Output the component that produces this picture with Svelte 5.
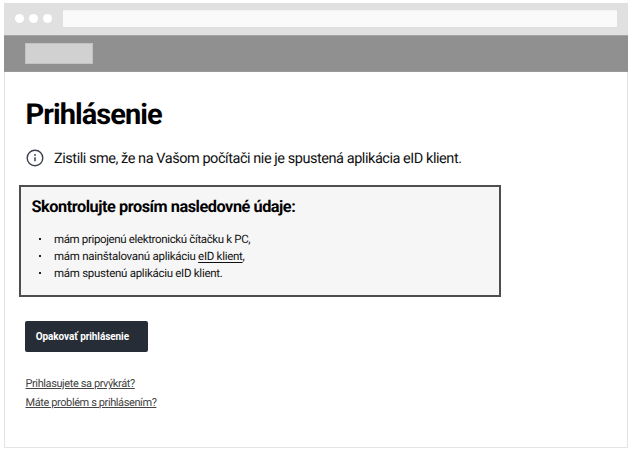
<script>
  const checks = [
    { text: 'mám pripojenú elektronickú čítačku k PC,', tight: true },
    { text: 'mám nainštalovanú aplikáciu ', link: 'eID klient', tail: ',' },
    { text: 'mám spustenú aplikáciu eID klient.' }
  ];
</script>

<div class="window">
  <div class="chrome">
    <div class="dots"><i></i><i></i><i></i></div>
    <div class="address"></div>
  </div>
  <header><div class="logo"></div></header>
  <main>
    <h1>Prihlásenie</h1>
    <div class="notice">
      <svg width="18" height="18" viewBox="0 0 18 18" fill="none">
        <circle cx="9" cy="9" r="7.8" stroke="#3c414b" stroke-width="1.4" />
        <path d="M9 8.2V12.2" stroke="#3c414b" stroke-width="1.5" />
        <circle cx="9" cy="6" r="0.9" fill="#3c414b" />
      </svg>
      <span>Zistili sme, že na Vašom počítači nie je spustená aplikácia eID klient.</span>
    </div>
    <section>
      <h2>Skontrolujte prosím nasledovné údaje:</h2>
      <ul>
        {#each checks as c}
          <li class:tight={c.tight}><span>{c.text}{#if c.link}<a href="#eid">{c.link}</a>{c.tail}{/if}</span></li>
        {/each}
      </ul>
    </section>
    <button>Opakovať prihlásenie</button>
    <nav>
      <a href="#first">Prihlasujete sa prvýkrát?</a>
      <a href="#help">Máte problém s prihlásením?</a>
    </nav>
  </main>
</div>

<style>
  :global(body) { background: #fff; }
  .window {
    box-sizing: border-box;
    width: 624px;
    height: 445px;
    margin: 3px 0 0 4px;
    display: flex;
    flex-direction: column;
    font-family: Roboto, sans-serif;
    color: #111;
    overflow: hidden;
    text-rendering: geometricPrecision;
  }
  .chrome {
    height: 32px;
    flex: none;
    box-sizing: border-box;
    background: #e0e0e0;
    display: flex;
    align-items: flex-start;
    padding: 7px 11px 0 11px;
    gap: 11px;
  }
  .dots { display: flex; gap: 5px; padding-top: 4px; }
  .dots i { width: 9px; height: 9px; border-radius: 50%; background: #fff; }
  .address { flex: 1; height: 17px; background: #fafafa; box-sizing: border-box; border-top: 1px solid #f3f3f3; }
  header {
    flex: none;
    height: 37px;
    box-sizing: border-box;
    background: #909090;
    border-top: 1px solid #a4a4a4;
    border-bottom: 1px solid #999;
    padding: 7px 0 0 21px;
  }
  .logo { box-sizing: border-box; width: 68px; height: 21px; background: #d1d1d1; border: 1px solid #c2c2c2; }
  main {
    flex: 1;
    box-sizing: border-box;
    border: 1px solid #e4e4e4;
    border-top: 0;
    padding: 24px 20px 0;
    display: flex;
    flex-direction: column;
    align-items: flex-start;
  }
  h1 { margin: 0; padding-left: 0.5px; font-size: 29px; line-height: 38px; font-weight: 700; letter-spacing: -0.95px; color: #000; white-space: nowrap; }
  .notice { display: flex; align-items: center; height: 20px; margin-top: 14px; padding-left: 1px; gap: 10px; font-size: 14.5px; letter-spacing: -0.45px; white-space: nowrap; }
  .notice svg { flex: none; }
  section {
    box-sizing: border-box;
    width: 482px;
    height: 112px;
    margin: 17px 0 0 -6px;
    border: 2px solid #4d4e50;
    background: #f6f6f6;
    padding: 10px 0 0 10.5px;
  }
  h2 { margin: 0; font-size: 16.3px; line-height: 20px; font-weight: 700; letter-spacing: -0.46px; color: #000; white-space: nowrap; }
  ul { list-style: none; margin: 13px 0 0; padding: 0; font-size: 11.5px; letter-spacing: -0.28px; }
  li { display: flex; align-items: center; height: 17px; white-space: pre; }
  li.tight { letter-spacing: -0.36px; }
  li::before { content: ''; width: 2px; height: 2px; margin: 0 13px 0 7.5px; background: #222; }
  li a { color: inherit; text-decoration: underline; text-underline-offset: 2px; text-decoration-thickness: 1px; }
  button {
    box-sizing: border-box;
    width: 123px;
    height: 31px;
    margin: 24px 0 0;
    border: 0;
    border-radius: 2px;
    background: #262d36;
    color: #fff;
    font: 700 10px/31px Roboto, sans-serif;
    letter-spacing: -0.08px;
    padding: 0 0 0 10.7px;
    text-align: left;
    white-space: nowrap;
  }
  nav { margin-top: 22px; padding-left: 0.5px; display: flex; flex-direction: column; align-items: flex-start; font-size: 11px; line-height: 19px; letter-spacing: -0.4px; white-space: nowrap; }
  nav a { color: #444; text-decoration: underline; text-decoration-thickness: 1px; text-underline-offset: 1px; }
</style>
